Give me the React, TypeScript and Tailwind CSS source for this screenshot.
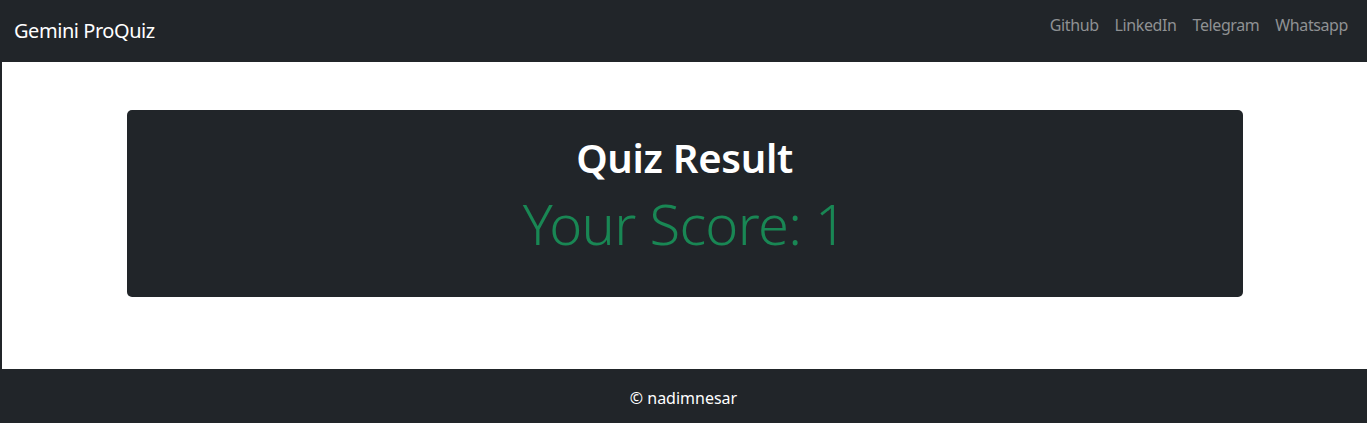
import React from 'react';

const NAV_LINKS = ['Github', 'LinkedIn', 'Telegram', 'Whatsapp'];

export default function App() {
  return (
    <div
      className="h-screen flex flex-col bg-[#212529] text-white"
      style={{ fontFamily: '"Noto Sans", "Open Sans", sans-serif' }}
    >
      {/* Navbar */}
      <nav className="h-[62px] flex items-center justify-between pl-[14px] pr-[19px] bg-[#212529]">
        <span className="text-[20px] leading-[30px] tracking-[-0.45px] text-white">Gemini ProQuiz</span>
        <div className="self-start mt-[13px] flex items-center gap-4">
          {NAV_LINKS.map((l) => (
            <a key={l} href="#" className="text-[16px] leading-[24px] tracking-[-0.4px] text-[#8f9193]">
              {l}
            </a>
          ))}
        </div>
      </nav>

      {/* Main */}
      <main className="flex-1 ml-[2px] bg-white pt-[48px]">
        <div className="max-w-[1140px] mx-auto px-3">
          <div className="bg-[#212529] rounded-[5px] h-[187px] flex flex-col items-center pt-[24px]">
            <h1 className="text-[40px] font-semibold leading-[1.2] tracking-[-0.3px] text-white mb-2">Quiz Result</h1>
            <p className="text-[56px] font-light leading-[1.2] tracking-[-0.7px] text-[#198754]">Your Score: 1</p>
          </div>
        </div>
      </main>

      {/* Footer */}
      <footer className="h-[54px] pt-[17px] text-center text-[16px] leading-[24px] text-white">
        © nadimnesar
      </footer>
    </div>
  );
}
